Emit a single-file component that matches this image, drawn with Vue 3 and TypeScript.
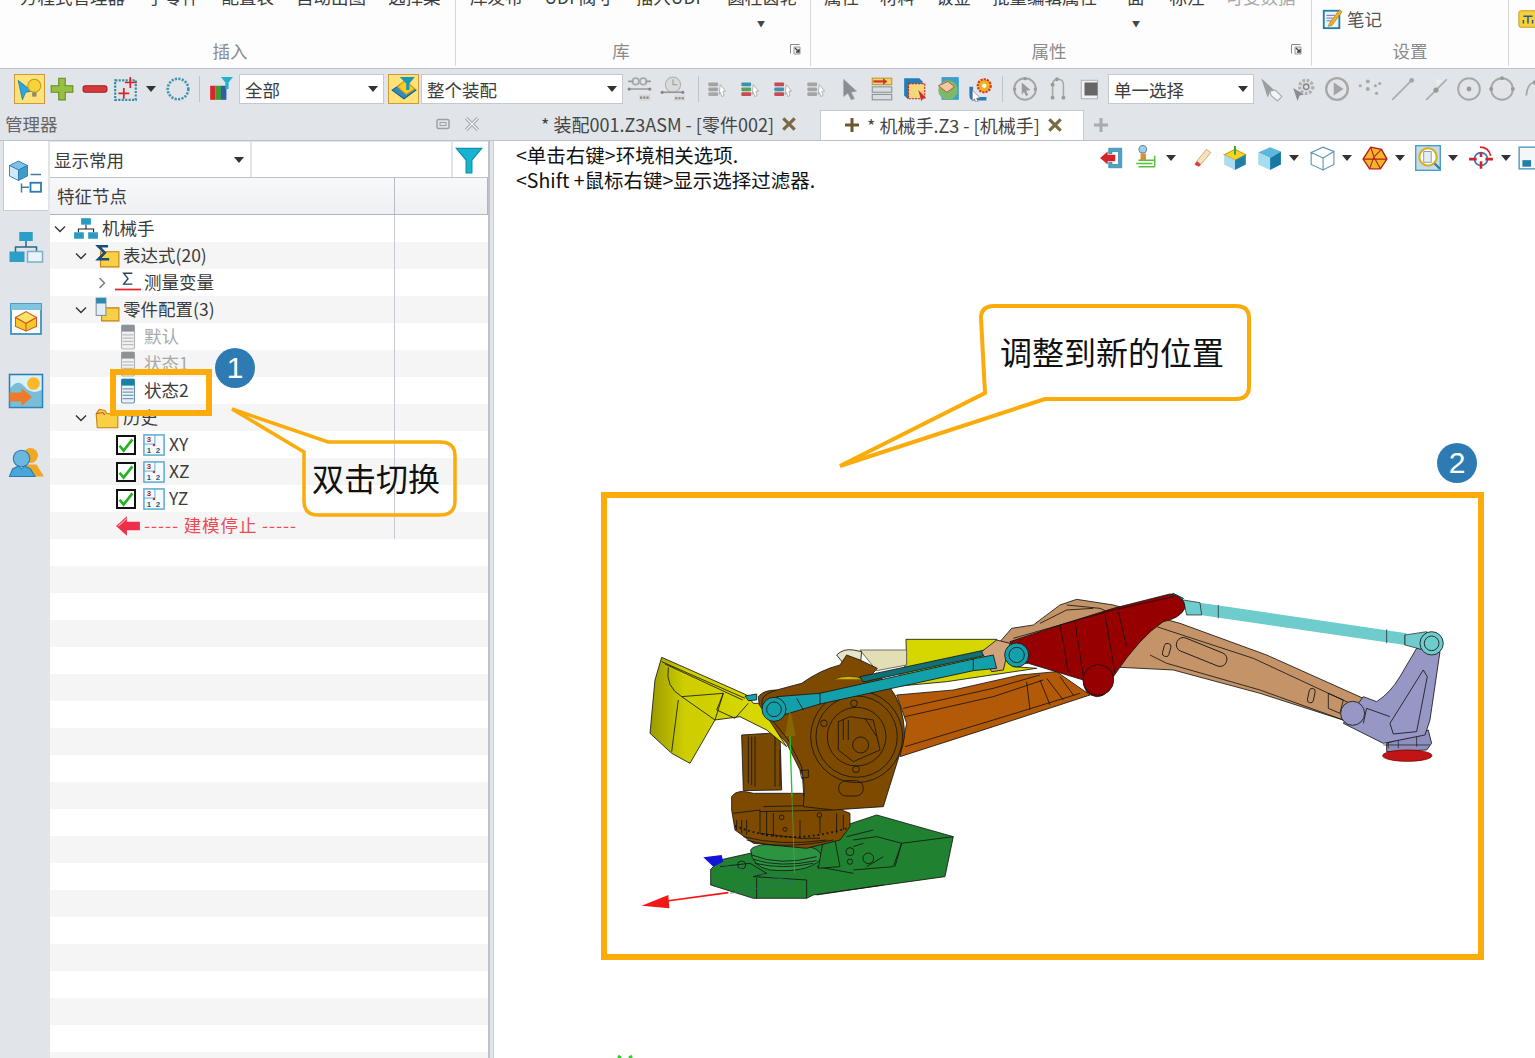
<template>
  <div class="app">
    <header class="ribbon">
      <section v-for="g in ribbonGroups" :key="g.label" class="rgroup" :class="g.cls">
        <div class="rgroup__items">
          <span v-for="it in g.items" :key="it.text" class="ritem" :class="{ 'ritem--off': it.off }">{{ it.text }}</span>
        </div>
        <span v-if="g.more !== undefined" class="rgroup__more">▼</span>
        <div class="rgroup__label">{{ g.label }}</div>
        <svg v-if="g.launcher" class="rgroup__launch" viewBox="0 0 12 12">
          <path d="M1.5 10.5V1.5H10.5" fill="none" stroke="#888" />
          <path d="M5 4h6v7H5z" fill="#eee" stroke="#999" />
          <path d="M6 5l4 4M10 6v3H7" fill="none" stroke="#444" stroke-width="1.3" />
        </svg>
      </section>
      <section class="rgroup rgroup--set">
        <div class="note-btn">
          <svg class="ic ic--22" viewBox="0 0 24 24" v-html="icons.note" />
          <span>笔记</span>
        </div>
        <div class="rgroup__label">设置</div>
      </section>
      <section class="rgroup rgroup--tail">
        <svg class="ic ic--22" viewBox="0 0 24 24" v-html="icons.tail" />
      </section>
    </header>

    <div class="toolbar">
      <span class="grip" />
      <span class="cell cell--on cell--31"><svg class="ic" viewBox="0 0 24 24" v-html="icons.bulb" /></span>
      <span class="cell"><svg class="ic" viewBox="0 0 24 24" v-html="icons.plus" /></span>
      <span class="cell"><svg class="ic" viewBox="0 0 24 24" v-html="icons.minus" /></span>
      <span class="cell cell--30"><svg class="ic" viewBox="0 0 24 24" v-html="icons.boxsel" /></span>
      <span class="cell cell--20"><i class="caret" /></span>
      <span class="cell cell--34"><svg class="ic" viewBox="0 0 24 24" v-html="icons.ring" /></span>
      <span class="sep sep--a" />
      <span class="cell cell--32"><svg class="ic" viewBox="0 0 24 24" v-html="icons.bars" /></span>
      <div class="select select--all"><span>全部</span><i class="caret" /></div>
      <span class="cell cell--on cell--31 cell--m"><svg class="ic" viewBox="0 0 24 24" v-html="icons.assy" /></span>
      <div class="select select--assy"><span>整个装配</span><i class="caret" /></div>
      <span v-for="n in toolsA" :key="n" class="cell"><svg class="ic" viewBox="0 0 24 24" v-html="icons[n]" /></span>
      <span class="sep sep--b" />
      <span v-for="(n, i) in toolsB" :key="i" class="cell"><svg class="ic" viewBox="0 0 24 24" v-html="icons[n]" /></span>
      <span class="sep sep--c" />
      <span v-for="n in toolsC" :key="n" class="cell"><svg class="ic" viewBox="0 0 24 24" v-html="icons[n]" /></span>
      <div class="select select--single"><span>单一选择</span><i class="caret" /></div>
      <span v-for="n in toolsD" :key="n" class="cell"><svg class="ic" viewBox="0 0 24 24" v-html="icons[n]" /></span>
    </div>

    <div class="strip">
      <div class="strip__title">
        <span>管理器</span>
        <svg class="pin" viewBox="0 0 14 12"><rect x="1" y="1.5" width="12" height="9" rx="1.5" fill="none" stroke="#9aa1aa" stroke-width="1.5" /><rect x="4" y="4.5" width="6" height="3" fill="none" stroke="#9aa1aa" /></svg>
        <svg class="close" viewBox="0 0 18 16"><path d="M3 2l12 12M15 2L3 14" stroke="#a5abb3" stroke-width="3.4" /><path d="M3 2l12 12M15 2L3 14" stroke="#f2f3f5" stroke-width="1.2" /></svg>
      </div>
      <div class="tabs">
        <div class="tab">
          <span>* 装配001.Z3ASM - [零件002]</span>
          <svg class="tab__x" viewBox="0 0 14 14"><path d="M2 2l10 10M12 2L2 12" stroke="#7a6a44" stroke-width="2.800" /></svg>
        </div>
        <div class="tab tab--active">
          <svg class="tab__pin" viewBox="0 0 16 16"><path d="M8 1v14M1 8h14" stroke="#6d5a2c" stroke-width="3" /></svg>
          <span>* 机械手.Z3 - [机械手]</span>
          <svg class="tab__x" viewBox="0 0 14 14"><path d="M2 2l10 10M12 2L2 12" stroke="#7a6a44" stroke-width="2.800" /></svg>
        </div>
        <svg class="tab__add" viewBox="0 0 16 16"><path d="M8 1v14M1 8h14" stroke="#a8acb2" stroke-width="3" /></svg>
      </div>
    </div>

    <div class="body">
      <aside class="side">
        <div class="side__btn side__btn--on"><svg class="ic ic--36" viewBox="0 0 24 24" v-html="icons.sideTree" /></div>
        <div class="side__btn"><svg class="ic ic--36" viewBox="0 0 24 24" v-html="icons.sideOrg" /></div>
        <div class="side__btn"><svg class="ic ic--36" viewBox="0 0 24 24" v-html="icons.sideCube" /></div>
        <div class="side__btn"><svg class="ic ic--36" viewBox="0 0 24 24" v-html="icons.sideImg" /></div>
        <div class="side__btn"><svg class="ic ic--36" viewBox="0 0 24 24" v-html="icons.sideUser" /></div>
      </aside>

      <div class="panel">
        <div class="filter">
          <div class="filter__sel"><span>显示常用</span><i class="caret" /></div>
          <div class="filter__input" />
          <div class="filter__btn">
            <svg viewBox="0 0 24 24" width="28" height="28"><path d="M1 2h22l-8.500 10v11h-5V12z" fill="#17b4d0" stroke="#0e8fb0" /></svg>
          </div>
        </div>
        <div class="thead"><div class="thead__main">特征节点</div></div>
        <div class="tree">
          <div v-for="(r, i) in rows" :key="i" class="row">
            <div v-if="r.text" class="row__main" :class="`lvl-${r.level}`">
              <svg v-if="r.chev" class="chev" viewBox="0 0 12 12">
                <path v-if="r.chev === 'down'" d="M1 3.500l5 5 5-5" fill="none" stroke="#333" stroke-width="1.400" />
                <path v-else d="M3.500 1l5 5-5 5" fill="none" stroke="#777" stroke-width="1.400" />
              </svg>
              <span v-else class="chev" />
              <span v-if="r.check" class="check">
                <svg viewBox="0 0 20 20" width="16" height="16"><path d="M2 11l5 6L18 3" fill="none" stroke="#1fb31f" stroke-width="3.200" /></svg>
              </span>
              <span class="row__icon" :class="{ 'row__icon--sm': r.check }">
                <svg class="ic" :class="r.check ? 'ic--22' : 'ic--26'" viewBox="0 0 24 24" v-html="icons[r.icon]" />
              </span>
              <span class="row__text" :class="r.tone">{{ r.text }}</span>
            </div>
          </div>
        </div>
      </div>

      <div class="split" />

      <main class="view">
        <div class="view__hint">
          <div>&lt;单击右键&gt;环境相关选项.</div>
          <div>&lt;Shift +鼠标右键&gt;显示选择过滤器.</div>
        </div>
        <div class="view__tools">
          <template v-for="t in viewTools" :key="t.icon">
            <span class="vcell" :class="t.cls"><svg class="ic ic--26" viewBox="0 0 24 24" v-html="icons[t.icon]" /></span>
            <span v-if="t.more" class="vcaret"><i class="caret" /></span>
          </template>
        </div>
      </main>
    </div>

    <!-- model on the graphics canvas, page coordinates -->
    <svg class="model" viewBox="600 580 900 478">
      <g stroke="#141414" stroke-width="2.500" stroke-linejoin="round" transform="translate(620 580) scale(.3333)">
        <path d="M858 178H1130L1180 260L1250 265L980 305L820 320L860 250Z" fill="#d6d600" />
        <path d="M720 210H860V255L770 272Z" fill="#e3dfb4" stroke="#555" />
        <path d="M650 225Q670 205 700 210L725 215L722 245L670 250Z" fill="#e8e4c8" />
        <path d="M365 465L480 458L485 630L370 632Z" fill="#7a4a00" />
        <path d="M385 470V610M405 470V620M465 465V620M480 510V620M395 470V615" fill="none" />
      </g>
      <g stroke="#141414" stroke-width="2.500" stroke-linejoin="round" transform="translate(1000 580) scale(.3333)">
        <path d="M-310 345L-140 330L60 285L170 275L270 345L-20 440L-300 530L-280 430Z" fill="#b35a08" />
        <path d="M-290 385L-20 325L120 285M-285 410L-20 350L130 300M-285 500L-20 420L240 340M80 305L90 390M120 300L150 375M140 295L190 360M180 290L220 345" fill="none" />
        <path d="M0 185L35 145L100 135L180 75L230 58L340 75L540 130L800 225L1090 355L1060 430L780 340L520 270L360 262L250 240Z" fill="#c49468" />
        <path d="M470 140L760 235L1050 370M450 225L500 250L780 330L1030 420M200 75L300 85L420 140M120 130L200 90L280 85" fill="none" />
        <rect x="525" y="195" width="160" height="42" rx="20" transform="rotate(22 605 216)" fill="none" />
        <rect x="490" y="190" width="20" height="40" rx="9" transform="rotate(15 500 210)" fill="none" />
        <rect x="925" y="325" width="18" height="44" rx="9" transform="rotate(12 934 347)" fill="none" />
        <path d="M985 340L1030 360L1020 400L985 385Z" fill="none" />
      </g>
      <g stroke="#141414" stroke-width="2.500" stroke-linejoin="round" transform="translate(620 580) scale(.3333)">
        <path d="M272 868L300 840L390 820L600 770L680 735L770 705L1000 770L975 890L580 945L560 955L400 955L272 915Z" fill="#208230" />
        <path d="M700 780L770 770L845 790L820 860L700 870M845 790L1000 770M845 790L825 860M400 890L560 900V955M590 860L700 880M410 895V955M590 945L790 915M300 860L390 850L440 880L400 890M680 770L760 750M700 800L730 790M740 860L790 830" fill="none" />
        <path d="M392 810Q400 790 510 790Q620 800 600 840Q560 880 450 870Q395 860 392 810Z" fill="#2c9440" />
        <path d="M395 825Q480 860 590 830M405 850Q490 870 580 850M400 838Q480 865 590 842" fill="none" />
        <path d="M590 745L660 735L645 780L660 860L595 865L610 780Z" fill="#208230" />
        <circle cx="745" cy="835" r="16" fill="none" /><circle cx="690" cy="815" r="12" fill="none" /><circle cx="365" cy="855" r="12" fill="none" /><circle cx="690" cy="845" r="8" fill="none" />
        <path d="M335 650Q350 625 400 640H550L640 680L690 700V740L660 780L560 805L400 790L345 750L335 690Z" fill="#7d4a00" />
        <path d="M340 700L420 690V760M420 695L640 690M420 760L540 775H600M540 720V775M600 710V760M370 770Q480 800 620 780M350 720V750M365 720V760M380 720V765M650 700V760M670 705V750M430 680L650 675M440 695V770M460 700V770M380 780Q480 812 640 780" fill="none" />
        <path d="M345 738Q500 800 680 745" fill="none" stroke-width="6" stroke-dasharray="5 9" />
        <circle cx="485" cy="712" r="7" fill="none" /><circle cx="598" cy="705" r="7" fill="none" /><circle cx="495" cy="748" r="6" fill="none" />
        <path d="M545 310Q600 270 660 255L680 225L720 240L772 265L745 295L770 280Q840 340 850 420Q860 480 840 520L790 680L640 690L550 680Q555 640 550 590L500 490L420 400L415 350Q430 330 470 330Z" fill="#7d4a00" />
        <circle cx="710" cy="470" r="138" fill="none" /><circle cx="710" cy="470" r="122" fill="none" /><circle cx="710" cy="470" r="88" fill="none" />
        <path d="M655 425L690 410L760 420L780 510L700 545L655 510Z" fill="none" /><circle cx="722" cy="495" r="24" fill="none" />
        <path d="M670 420V480M685 420V480M735 415L770 470" fill="none" />
        <circle cx="702" cy="370" r="10" fill="none" /><circle cx="612" cy="430" r="10" fill="none" /><circle cx="708" cy="568" r="10" fill="none" />
        <rect x="656" y="602" width="74" height="46" rx="22" fill="none" />
        <path d="M540 572L565 570V592L545 595Z" fill="none" />
        <path d="M470 330Q400 350 440 400L505 480L545 560L552 650" fill="none" />
        <path d="M640 298Q690 280 730 298" fill="#c9b400" stroke-width="1.500" />
        <defs><linearGradient id="bucket" x1="0" x2="1" y1="0" y2="0"><stop offset="0" stop-color="#9a9a00" /><stop offset=".25" stop-color="#cdcd00" /><stop offset="1" stop-color="#dcdc00" /></linearGradient></defs>
        <path d="M90 460L105 300L125 232L380 345L400 370L415 370L500 500L440 450L360 410L285 420L210 550L155 520Z" fill="url(#bucket)" />
        <path d="M125 245L375 355M135 252L368 360M145 262Q135 320 185 350L310 340L285 420M175 360L155 515M185 350L285 420M310 340L290 390L345 415L385 370" fill="none" />
        <path d="M375 348L410 342V360L385 362Z" fill="#14a0aa" />
        <path d="M720 290L1095 210L1098 226L730 306Z" fill="#0f7078" />
        <path d="M1085 215L1130 180L1170 190L1150 270L1115 275Z" fill="#d2a27a" />
        <path d="M470 350L600 340L1070 235L1120 225L1130 265L1060 272L600 372L490 405Z" fill="#14a0aa" />
        <path d="M600 340V372M530 355L550 390M1060 235V272" fill="none" />
        <circle cx="462" cy="388" r="36" fill="#14a0aa" /><circle cx="462" cy="388" r="22" fill="#14a0aa" />
        <path d="M510 385L527 468H495Z" fill="#8a7a00" fill-opacity=".6" stroke="none" />
        <path d="M510 468L516 650" stroke="#1ec81e" stroke-width="4" fill="none" />
        <path d="M516 650L524 880" stroke="#5aa05a" stroke-width="2" fill="none" />
        <path d="M290 850L520 905L330 940" stroke="#3a6a70" stroke-width="2" fill="none" />
        <path d="M250 832L305 825L310 845L280 860Z" fill="#1414d8" stroke="none" />
        <path d="M325 938L140 963" stroke="#ff1010" stroke-width="5" fill="none" />
        <path d="M65 977L145 945L148 985Z" fill="#f01818" stroke="none" />
      </g>
      <g stroke="#141414" stroke-width="2.500" stroke-linejoin="round" transform="translate(1000 580) scale(.3333)">
        <path d="M1160 490L1285 450L1295 490L1280 510L1160 515Z" fill="#8f8fbe" />
        <path d="M1150 495H1290M1165 480V505M1195 480V505M1250 470V500" fill="none" stroke-width="2" />
        <ellipse cx="1222" cy="527" rx="74" ry="17" fill="#c21414" stroke="#7a0a0a" />
        <path d="M1090 350L1130 365Q1170 340 1200 290L1250 205L1320 215L1290 420L1275 465L1150 490L1030 430Z" fill="#9797c6" />
        <path d="M1270 270L1170 430L1180 462L1250 455L1282 290Z" fill="none" />
        <path d="M1100 385L1170 410M1100 385L1090 430" fill="none" />
        <circle cx="1058" cy="400" r="36" fill="#9797c6" />
        <path d="M550 60L600 68L1220 160L1215 195L600 105L560 105Z" fill="#6fcccc" stroke-width="0" />
        <path d="M550 60L600 68L605 105L560 105ZM655 75V115M1160 148V190M1215 165V195" fill="none" stroke-width="2" />
        <path d="M1215 165L1280 155L1290 215L1215 195Z" fill="#6fcccc" stroke-width="2" />
        <circle cx="1295" cy="190" r="35" fill="#6fcccc" /><circle cx="1295" cy="190" r="22" fill="none" />
        <path d="M500 50L520 40L550 55L540 70Z" fill="#14a0aa" />
        <path d="M30 185L180 135L340 85L510 42Q555 50 555 85Q540 115 490 125Q420 170 340 290Q330 350 290 350Q250 345 250 300L85 250L60 250Z" fill="#960000" />
        <path d="M40 175L180 135L340 90L520 50M180 135L205 275M225 125L250 290M315 105L345 280M355 95L380 200" fill="none" />
        <circle cx="295" cy="300" r="46" fill="#960000" />
        <circle cx="50" cy="225" r="36" fill="#14a0aa" /><circle cx="50" cy="225" r="23" fill="none" />
      </g>
      <path d="M618 1056L621 1058M632 1056L629 1058" stroke="#2fd02f" stroke-width="3" fill="none" />
    </svg>

    <!-- annotations drawn over the screenshot -->
    <svg class="marks" viewBox="0 0 1535 1058">
      <path d="M232 409L328 442H440Q455 442 455 456V501Q455 515 440 515H318Q304 515 304 501V452Z" fill="none" stroke="#fbab0a" stroke-width="3.500" />
      <path d="M840 466L985 393L981 318Q981 306 994 306H1236Q1249 306 1249 318V386Q1249 399 1236 399H1045Z" fill="none" stroke="#fbab0a" stroke-width="4" />
    </svg>
    <div class="frame frame--state" />
    <div class="frame frame--model" />
    <span class="badge badge--one">1</span>
    <span class="badge badge--two">2</span>
    <span class="callout callout--switch">双击切换</span>
    <span class="callout callout--move">调整到新的位置</span>
  </div>
</template>

<script setup lang="ts">
interface RibbonItem { text: string; off?: boolean }
interface Row { level: number; chev?: 'down' | 'right'; icon: string; text: string; tone?: string; check?: boolean }

const ribbonGroups: { label: string; cls: string; items: RibbonItem[]; more?: boolean; launcher?: boolean }[] = [
  {
    label: '插入',
    cls: 'rgroup--insert',
    items: [{ text: '方程式管理器' }, { text: '子零件' }, { text: '配置表' }, { text: '自动出图' }, { text: '选择集' }],
  },
  {
    label: '库',
    cls: 'rgroup--lib',
    more: true,
    launcher: true,
    items: [{ text: '库发布' }, { text: 'UDF阀寸' }, { text: '插入UDF' }, { text: '圆柱齿轮' }],
  },
  {
    label: '属性',
    cls: 'rgroup--prop',
    more: true,
    launcher: true,
    items: [
      { text: '属性' }, { text: '材料' }, { text: '钣金' }, { text: '批量编辑属性' },
      { text: '面' }, { text: '标注' }, { text: '可变数据', off: true },
    ],
  },
]

const toolsA = ['refChain', 'refClock']
const toolsB = ['stackA', 'stackB', 'stackC', 'stackD', 'cursor', 'layers', 'cubeSel', 'globeHand', 'gearCursor']
const toolsC = ['navRing', 'curve', 'square']
const toolsD = ['pickTag', 'pickGear', 'play', 'dots', 'line', 'lineMid', 'target', 'circle3', 'arcEnd']

const viewTools: { icon: string; more?: boolean; cls?: string }[] = [
  { icon: 'exit' }, { icon: 'sweep', more: true }, { icon: 'eraser', cls: 'vcell--gap' }, { icon: 'cubeUp' },
  { icon: 'cubeBlue', more: true }, { icon: 'cubeWire', more: true }, { icon: 'poly', more: true },
  { icon: 'zoomDoc', more: true }, { icon: 'aim', more: true }, { icon: 'win', cls: 'vcell--last' },
]

const rows: Row[] = [
  { level: 0, chev: 'down', icon: 'org', text: '机械手' },
  { level: 1, chev: 'down', icon: 'folderSum', text: '表达式(20)' },
  { level: 2, chev: 'right', icon: 'sigma', text: '测量变量' },
  { level: 1, chev: 'down', icon: 'folderCfg', text: '零件配置(3)' },
  { level: 2, icon: 'cfgGray', text: '默认', tone: 'row__text--off' },
  { level: 2, icon: 'cfgGray', text: '状态1', tone: 'row__text--off' },
  { level: 2, icon: 'cfgBlue', text: '状态2' },
  { level: 1, chev: 'down', icon: 'folder', text: '历史' },
  { level: 2, icon: 'plane', text: 'XY', check: true },
  { level: 2, icon: 'plane', text: 'XZ', check: true },
  { level: 2, icon: 'plane', text: 'YZ', check: true },
  { level: 2, icon: 'stop', text: '----- 建模停止 -----', tone: 'row__text--stop' },
  ...Array.from({ length: 20 }, () => ({ level: 0, icon: '', text: '' })),
]

const stack = (a: string, b: string, c: string, cur = '#fff') => `
  <rect x="4" y="6" width="9" height="3.500" rx="1" fill="${a}"/>
  <rect x="4" y="10.500" width="9" height="3.500" rx="1" fill="${b}"/>
  <rect x="4" y="15" width="9" height="3.500" rx="1" fill="${c}"/>
  <path d="M15 8l5 6h-2.500l1 4-2 1-1.500-4-1 2z" fill="${cur}" stroke="#aaa" stroke-width=".8"/>`

const icons: Record<string, string> = {
  bulb: `<path d="M1 4l13 10-6 1-3 7z" fill="#2aa6e0" stroke="#14709f" stroke-width=".6"/>
    <circle cx="16" cy="9" r="6" fill="#f7d23a" stroke="#c99a1a"/><rect x="14" y="15" width="4" height="4" fill="#8a8a70"/>`,
  plus: `<path d="M9 2h6v7h7v6h-7v7H9v-7H2V9h7z" fill="#97bf43" stroke="#628c22"/>`,
  minus: `<rect x="1" y="9" width="22" height="6" rx="2" fill="#d43a3a" stroke="#a51e1e"/>`,
  boxsel: `<rect x="2" y="4" width="19" height="18" fill="none" stroke="#3a8aa5" stroke-width="2" stroke-dasharray="2 1.2"/>
    <path d="M16 1v10M11 6h11M10 11v10M5 16h10" stroke="#d0282c" stroke-width="1.600"/>`,
  ring: `<circle cx="12" cy="12" r="9.500" fill="none" stroke="#3f95ad" stroke-width="2.400" stroke-dasharray="2 1.200"/>`,
  bars: `<rect x="2" y="9" width="5" height="13" fill="#d8262a"/><rect x="7" y="9" width="5" height="13" fill="#3f9a3a"/><rect x="12" y="9" width="5" height="13" fill="#2f5da8"/>
    <path d="M12 1h11l-4 5v6h-3V6z" fill="#20b4c8"/>`,
  assy: `<path d="M1 13l9-6 13 6-11 8z" fill="#2f8bc0" stroke="#14608f"/><path d="M6 10l7-6 9 8-8 5z" fill="#f9cc1d" stroke="#c99a1a"/><path d="M8 1h14l-5 6v6h-3V7z" fill="#1799b8"/>`,
  refChain: `<circle cx="8" cy="5" r="3" fill="none" stroke="#aaa" stroke-width="1.500"/><circle cx="15" cy="5" r="3" fill="none" stroke="#aaa" stroke-width="1.500"/>
    <path d="M1 5h5M17 5h5M2 12h19" stroke="#999" stroke-width="1.600"/><circle cx="2" cy="12" r="1.500" fill="#888"/><circle cx="21" cy="12" r="1.500" fill="#888"/>
    <rect x="11" y="17" width="11" height="6" fill="#d8d8d8"/><path d="M12 20h9" stroke="#888" stroke-width="2" stroke-dasharray="2 1"/>`,
  refClock: `<circle cx="12" cy="8" r="7" fill="#d9dadc" stroke="#b5b5b5"/><path d="M12 3v5h4" stroke="#999" fill="none"/>
    <path d="M2 15h19" stroke="#999" stroke-width="1.600"/><circle cx="2" cy="15" r="1.500" fill="#888"/><circle cx="21" cy="15" r="1.500" fill="#888"/>
    <rect x="13" y="18" width="10" height="5" fill="#d8d8d8"/><path d="M14 20.500h8" stroke="#888" stroke-width="2" stroke-dasharray="2 1"/>`,
  stackA: stack('#a2a2a2', '#a2a2a2', '#a8a8a8'),
  stackB: stack('#3a94ac', '#5aa05a', '#c84a52'),
  stackC: stack('#c84a52', '#3a94ac', '#c84a52'),
  stackD: stack('#a4a4a4', '#a4a4a4', '#a4a4a4'),
  cursor: `<path d="M7 3l12 11-5 1 3 6-3 1-3-6-4 3z" fill="#8a8e94" stroke="#a5a5a5" stroke-width=".6"/>`,
  layers: `<rect x="3" y="2" width="18" height="6" fill="#f3d266" stroke="#b99a3a"/><path d="M4 5h11" stroke="#d03030" stroke-width="2"/><path d="M13 2l4 3-4 3z" fill="#d03030"/>
    <rect x="3" y="10" width="18" height="5" fill="#d8dde0" stroke="#8a9299"/><rect x="3" y="17" width="18" height="5" fill="#d8dde0" stroke="#8a9299"/>`,
  cubeSel: `<path d="M2 2h14l3 3v16H5l-3-3z" fill="#1f7fb8"/><rect x="6" y="7" width="15" height="14" fill="#f3d77a" stroke="#c02a2a" stroke-dasharray="2 1"/><path d="M15 13l7 7-3 .5-1 3z" fill="#d0282c"/>`,
  globeHand: `<rect x="6" y="1" width="16" height="21" fill="#3aa0c8"/><circle cx="12" cy="13" r="9" fill="#7fb86a"/><path d="M3 9l9-4 6 5-7 5z" fill="#f0c9a0" stroke="#b05030" stroke-width=".8"/>`,
  gearCursor: `<path d="M3 10v8q0 3 3 3h11" fill="none" stroke="#2a7ab8" stroke-width="3.400"/><circle cx="15" cy="9" r="6" fill="#f0b020" stroke="#d03a20" stroke-dasharray="2 1" stroke-width="2"/><circle cx="15" cy="9" r="2" fill="#fff"/>
    <path d="M4 13l7 7-3 .5 1 3-2 .5-1-3-2 2z" fill="#fff" stroke="#777" stroke-width=".6"/>`,
  navRing: `<circle cx="12" cy="12" r="10" fill="none" stroke="#a5a5a5" stroke-width="1.800"/><circle cx="2.500" cy="12" r="1.500" fill="#999"/><circle cx="21.500" cy="12" r="1.500" fill="#999"/><circle cx="12" cy="2.500" r="1.500" fill="#999"/><path d="M9 6l8 7-4 .5 2 4-2 1-2-4-2 3z" fill="#999"/>`,
  curve: `<path d="M7 20V8q0-5 5-5t5 5v12" fill="none" stroke="#a8a8a8" stroke-width="1.400"/><circle cx="7" cy="8" r="1.800" fill="#999"/><circle cx="7" cy="20" r="1.800" fill="#999"/><circle cx="17" cy="20" r="1.800" fill="#999"/><circle cx="11" cy="3" r="1.800" fill="#999"/>`,
  square: `<rect x="3" y="4" width="15" height="17" fill="#f2f3f4" stroke="#b5b5b5"/><rect x="6" y="6" width="12" height="12" fill="#666"/>`,
  pickTag: `<path d="M3 2l13 12-5 1-2 5z" fill="#9a9ea3"/><path d="M11 14l5-1 6 6-4 4-6-5z" fill="#f3f4f5" stroke="#aaa"/>`,
  pickGear: `<circle cx="14" cy="10" r="6" fill="none" stroke="#b0b0b0" stroke-width="3" stroke-dasharray="2.500 1.500"/><circle cx="14" cy="10" r="2.500" fill="none" stroke="#888" stroke-width="1.400"/><path d="M2 11l10 6-4 1-2 5z" fill="#8a8e94"/>`,
  play: `<circle cx="12" cy="12" r="10" fill="none" stroke="#a8a8a8" stroke-width="2.200"/><path d="M9 6l9 6-9 6z" fill="#a4a4a4"/>`,
  dots: `<g fill="#a8a8a8"><circle cx="3" cy="9" r="1.400"/><circle cx="10" cy="5" r="1.800"/><circle cx="10" cy="12" r="1.800"/><circle cx="17" cy="9" r="1.400"/><circle cx="21" cy="7" r="1.400"/><circle cx="18" cy="16" r="1.500"/></g>`,
  line: `<path d="M2 22L19 5" stroke="#acacac" stroke-width="1.600"/><circle cx="20" cy="4" r="2.200" fill="#a5a5a5"/>`,
  lineMid: `<path d="M3 22L22 3" stroke="#acacac" stroke-width="1.600"/><circle cx="12" cy="13" r="2.400" fill="#999"/><path d="M12 3l6 1-5 5z" fill="#eee"/>`,
  target: `<circle cx="12" cy="12" r="10" fill="none" stroke="#a8a8a8" stroke-width="1.800"/><circle cx="12" cy="12" r="2.200" fill="#999"/>`,
  circle3: `<circle cx="12" cy="12" r="10" fill="none" stroke="#a8a8a8" stroke-width="1.800"/><circle cx="12" cy="2" r="1.800" fill="#999"/><circle cx="2" cy="12" r="1.800" fill="#999"/><circle cx="22" cy="12" r="1.800" fill="#999"/>`,
  arcEnd: `<path d="M4 18Q5 6 12 6t8 12" fill="none" stroke="#a8a8a8" stroke-width="1.600"/><circle cx="12" cy="6" r="2" fill="#999"/>`,
  exit: `<path d="M9 3h12v18H9v-5h3v2h6V6h-6v2H9z" fill="#4aa5c8" stroke="#2a7a9f" stroke-width=".6"/><path d="M1 12l7-6v3h7v6H8v3z" fill="#d4242a"/>`,
  sweep: `<circle cx="9" cy="4" r="3.500" fill="#9fd0e8" stroke="#5a8aa0"/><rect x="7" y="8" width="5" height="6" fill="#e88a30"/><path d="M5 14h15M3 17h15M5 20h15M20 10v10" fill="none" stroke="#58c038" stroke-width="1.400"/>`,
  eraser: `<path d="M17 4l4 3-9 11-4-3z" fill="#f7e2b8" stroke="#a09060" stroke-width=".6"/><path d="M8 15l4 3-2 2-4-2z" fill="#d83a4a"/>`,
  cubeUp: `<path d="M2 9l10-5 10 5-10 5z" fill="#f7d328" stroke="#c8a010"/><path d="M2 9v9l10 5v-9z" fill="#a8dcee"/><path d="M22 9v9l-10 5v-9z" fill="#1f7fa8"/><path d="M12 1v8" stroke="#3aa03a" stroke-width="1.800"/>`,
  cubeBlue: `<path d="M2 7l11-5 10 4-10 6z" fill="#5cb7dc"/><path d="M2 7v11l11 5V12z" fill="#a6dcf0"/><path d="M23 6v12l-10 5V12z" fill="#1579a3"/>`,
  cubeWire: `<path d="M2 7l11-5 10 4-10 6zM2 7v11l11 5V12zM23 6v12l-10 5V12z" fill="#fff" stroke="#5a93b5" stroke-width="1"/>`,
  poly: `<path d="M8 2l10 2 5 9-6 9-10 0-6-9z" fill="#f3b62a" stroke="#b51e1e" stroke-width="1.300"/><path d="M8 2l3 9 7-7M1 13h10l12 0M11 11l-4 11M11 11l6 11" stroke="#b51e1e" fill="none"/>`,
  zoomDoc: `<rect x="0.500" y="0.500" width="23" height="23" fill="#c7dcea" stroke="#4aa0c8" stroke-width="1.600"/><circle cx="12" cy="11" r="8" fill="#fff" stroke="#d8b020" stroke-width="2"/><path d="M8 6h7v10H8z" fill="#e6edf2" stroke="#7a93a5" stroke-width=".8"/><path d="M18 17l5 5" stroke="#2a7a9f" stroke-width="2"/>`,
  aim: `<circle cx="12" cy="13" r="6" fill="none" stroke="#3a7ab0" stroke-width="1.600"/><path d="M1 13h7M16 13h7M12 7v4M12 15v7" stroke="#d4242a" stroke-width="2.400"/><path d="M11 2q8 0 10 8" fill="none" stroke="#d4242a" stroke-width="1.600"/>`,
  win: `<rect x="2" y="2" width="20" height="20" fill="#f4f7f9" stroke="#5fa0c0" stroke-width="1.400"/><rect x="5" y="14" width="8" height="6" fill="#1f7fa8"/>`,
  note: `<rect x="3" y="3" width="17" height="19" fill="#eaf3f8" stroke="#1f7fa8" stroke-width="2"/><path d="M6 8h9M6 11h7M6 14h5" stroke="#66a" /><path d="M9 17L20 2l3 2-11 15-4 1z" fill="#f0b020" stroke="#a06a10" stroke-width=".6"/>`,
  tail: `<rect x="2" y="3" width="20" height="18" rx="2" fill="#f7cf3a" stroke="#c09a1a"/><path d="M7 9h10M12 9v8M7 13v4M17 13v4" stroke="#1f5a8f" stroke-width="1.600" fill="none"/>`,
  sideTree: `<path d="M1 5l6-3 6 3-6 3z" fill="#7fc0e4" stroke="#2a7ab8" stroke-width=".6"/><path d="M1 5v7l6 3V8z" fill="#cfe8f5" stroke="#2a7ab8" stroke-width=".6"/><path d="M13 5v7l-6 3V8z" fill="#3f9bcc" stroke="#2a7ab8" stroke-width=".6"/>
    <path d="M15 11h7M9 17v6M9 19.500h5" stroke="#4a7a99" stroke-width="1" fill="none"/><rect x="15" y="16.500" width="7" height="6" fill="#fff" stroke="#2a7ab8" stroke-width="1.200"/>`,
  sideOrg: `<rect x="7.500" y="2" width="9" height="6" fill="#2aa0c8"/><path d="M12 8v4M5 16v-4h14v4" stroke="#27658a" fill="none"/><rect x="1" y="15" width="10" height="7" fill="#2aa0c8"/><rect x="13" y="15" width="10" height="7" fill="#eaf3f8" stroke="#7ab0cc"/>`,
  sideCube: `<rect x="2" y="2" width="20" height="20" fill="#fff" stroke="#3f93bd" stroke-width="1.200"/><rect x="2" y="2" width="20" height="4" fill="#7fc4e0"/><path d="M5 11l7-4 7 4-7 4z" fill="#fbe36a" stroke="#d05a20" stroke-width=".7"/><path d="M5 11v6l7 3v-5zM19 11v6l-7 3v-5z" fill="#f5c92a" stroke="#d05a20" stroke-width=".7"/>`,
  sideImg: `<rect x="1" y="1" width="22" height="22" fill="#d8f0f8" stroke="#2a7ab8"/><circle cx="17" cy="7" r="4.200" fill="#f9b82a"/><path d="M1 11q5-8 10-2t12 2v12H1z" fill="#3a9cc0" fill-opacity=".6"/><path d="M1 13h8v-3l7 6-7 6v-3H1z" fill="#ee7a2a"/>`,
  sideUser: `<circle cx="15" cy="7" r="5" fill="#f0a824" /><path d="M11 13h8l5 8H14z" fill="#f0a824"/><circle cx="9" cy="9" r="5.500" fill="#6ab8e0" stroke="#2a7ab8" stroke-width=".7"/><path d="M7 14l2 2 2-2 4 2 3 5H1l2-5z" fill="#4aa5d8" stroke="#2a7ab8" stroke-width=".7"/>`,
  org: `<rect x="7.500" y="2" width="9" height="6" fill="#2a9cc4"/><path d="M12 8v4M5 15v-3h14v3" stroke="#222" fill="none"/><rect x="1" y="15" width="9" height="6" fill="#2a9cc4"/><rect x="14" y="15" width="9" height="6" fill="#2a9cc4"/>`,
  folder: `<path d="M2 8l3-4 5 1 2 3h10v13H3z" fill="#f8cf45" stroke="#c88010"/><path d="M2 8l6-1 2 2" fill="none" stroke="#d9531e"/>`,
  folderSum: `<path d="M6 8h17v14H6z" fill="#f8cf45" stroke="#c88010"/><path d="M13 3H4l6 6-6 6h10" fill="none" stroke="#1a4a7a" stroke-width="2.400"/>`,
  folderCfg: `<path d="M7 10h16v12H7z" fill="#f8cf45" stroke="#c88010"/><rect x="2" y="1" width="9" height="16" fill="#e6edf2" stroke="#7a93a5"/><rect x="2" y="1" width="9" height="5" fill="#2a8ab0"/>`,
  sigma: `<path d="M16 3H8l4 5-4 5h8" fill="none" stroke="#245" stroke-width="1.300"/><path d="M0 18h24" stroke="#e8202a" stroke-width="1.600"/>`,
  cfgGray: `<rect x="6" y="1" width="12" height="22" rx="1.500" fill="#f1f2f3" stroke="#aeb1b5"/><rect x="6" y="1" width="12" height="6" fill="#8d9094"/><path d="M7 10h10M7 13h10M7 16h10M7 19h10" stroke="#bbb"/>`,
  cfgBlue: `<rect x="6" y="1" width="12" height="22" rx="1.500" fill="#e9f2f6" stroke="#6a93a8"/><rect x="6" y="1" width="12" height="6" fill="#1580a8"/><path d="M7 10h10M7 13h10M7 16h10M7 19h10" stroke="#7a9cb0"/>`,
  plane: `<rect x="1" y="1" width="22" height="22" fill="#f4fafd" stroke="#5aa9cc" stroke-width="1.600"/><path d="M13 1v10M1 11h12" stroke="#5aa9cc"/><circle cx="12" cy="12" r="1.400" fill="#e02a2a"/>
    <g font-family="Liberation Sans" font-size="8.500" font-weight="700"><text x="4" y="9" fill="#a02a2a">3</text><text x="4" y="21" fill="#285a7a">1</text><text x="14" y="21" fill="#285a7a">2</text></g>`,
  stop: `<path d="M1 12l10-9v5h12v8H11v5z" fill="#ef2f4a"/><path d="M3 12l8-7" stroke="#ff9aa5"/>`,
}
</script>

<style>
html, body { margin: 0; background: #fff; }
</style>

<style scoped>
.app {
  position: relative;
  display: flex;
  flex-direction: column;
  width: 1535px;
  height: 1058px;
  overflow: hidden;
  background: #fff;
  font-family: "Noto Sans CJK SC", "Noto Sans", sans-serif;
  font-size: 17.500px;
  color: #3c3c3c;
}
.ic { display: block; width: 28px; height: 28px; }
.ic--22 { width: 22px; height: 22px; }
.ic--26 { width: 26px; height: 26px; }
.ic--36 { width: 36px; height: 36px; }

/* ribbon */
.ribbon {
  display: flex;
  flex: none;
  height: 68px;
  padding-left: 1px;
  background: #fdfdfe;
  border-bottom: 1px solid #bcc2c9;
  overflow: hidden;
}
.rgroup {
  position: relative;
  flex: none;
  height: 66px;
  border-right: 1px solid #d5d8dc;
}
.rgroup--insert { width: 454px; }
.rgroup--lib { width: 354px; }
.rgroup--prop { width: 500px; }
.rgroup--set { width: 196px; }
.rgroup--tail { flex: 1; border-right: 0; padding: 8px 0 0 8px; }
.rgroup__items {
  display: flex;
  margin-top: -13px;
  line-height: 20px;
  white-space: nowrap;
}
.ritem--off { color: #a8a8a8; }
.rgroup--insert .rgroup__items { padding-left: 19px; gap: 22px; }
.rgroup--lib .rgroup__items { padding-left: 14px; gap: 22px; }
.rgroup--prop .rgroup__items { padding-left: 13px; gap: 21px; }
.rgroup--prop .ritem:nth-child(5) { margin-left: 9px; }
.rgroup--prop .ritem:nth-child(6) { margin-left: 4px; }
.rgroup__more {
  position: absolute;
  top: 18px;
  font-size: 8px;
  line-height: 12px;
  color: #444;
}
.rgroup--lib .rgroup__more { left: 301px; }
.rgroup--prop .rgroup__more { left: 321px; }
.rgroup__label {
  position: absolute;
  left: 0;
  right: 0;
  top: 39px;
  line-height: 24px;
  text-align: center;
  font-size: 17.500px;
  color: #8b8b8b;
}
.rgroup--insert .rgroup__label { left: 4px; }
.rgroup--lib .rgroup__label, .rgroup--prop .rgroup__label { right: 24px; }
.rgroup__launch {
  position: absolute;
  right: 9px;
  top: 43px;
  width: 12px;
  height: 12px;
}
.note-btn {
  display: flex;
  align-items: center;
  gap: 4px;
  padding: 8px 0 0 9px;
  font-size: 17.500px;
  color: #555;
  line-height: 22px;
}

/* command bar */
.toolbar {
  display: flex;
  flex: none;
  align-items: center;
  height: 40px;
  background: #e1e4e8;
}
.grip {
  width: 3px;
  height: 24px;
  margin: 0 10px 0 4px;
  background: repeating-linear-gradient(#6a7585 0 2px, transparent 2px 5px);
}
.cell {
  display: flex;
  flex: none;
  align-items: center;
  justify-content: center;
  width: 33px;
  height: 30px;
}
.cell .ic { width: 26px; height: 26px; }
.cell--20 { width: 20px; }
.cell--30 { width: 30px; }
.cell--31 { width: 31px; }
.cell--32 { width: 32px; }
.cell--34 { width: 34px; }
.cell--m { margin: 0 2px 0 4px; }
.cell--on { box-sizing: border-box; background: #ffe27a; border: 1px solid #d09a3a; }
.sep { flex: none; width: 1px; height: 26px; background: #bfc4ca; }
.sep--a { margin: 0 5px 0 4px; }
.sep--b { margin: 0 1px 0 9px; }
.sep--c { margin: 0 5px 0 5px; }
.caret {
  display: block;
  width: 0;
  height: 0;
  border: 5px solid transparent;
  border-top: 6px solid #333;
  border-bottom: 0;
}
.select {
  display: flex;
  flex: none;
  align-items: center;
  justify-content: space-between;
  box-sizing: border-box;
  height: 30px;
  padding: 0 5px 0 5px;
  background: #fff;
  border: 1px solid #c4c9cf;
  font-size: 17.500px;
}
.select--all { width: 145px; margin-left: 2px; }
.select--assy { width: 202px; }
.select--single { width: 146px; margin-left: 1px; }

/* manager title and document tabs */
.strip {
  display: flex;
  flex: none;
  height: 32px;
  background: #e1e4e8;
  border-bottom: 1px solid #bcc2c9;
  box-sizing: border-box;
}
.strip__title {
  display: flex;
  flex: none;
  align-items: center;
  width: 495px;
  padding: 0 0 2px 5px;
  box-sizing: border-box;
  color: #666;
  font-size: 17.500px;
}
.pin { width: 14px; height: 12px; margin-left: 378px; }
.close { width: 18px; height: 16px; margin-left: 13px; }
.tabs { display: flex; align-items: stretch; }
.tab {
  display: flex;
  align-items: center;
  width: 325px;
  box-sizing: border-box;
  padding: 0 0 2px 46px;
  white-space: nowrap;
  font-size: 18px;
  color: #444;
}
.tab__x { flex: none; width: 16px; height: 16px; margin-left: 7px; }
.tab--active {
  width: 264px;
  padding-left: 23px;
  margin-top: 1px;
  background: #fff;
  border: 1px solid #c8ccd2;
  border-bottom: 0;
}
.tab__pin { flex: none; width: 16px; height: 16px; margin-right: 7px; }
.tab__add { align-self: center; width: 16px; height: 16px; margin-left: 9px; }

/* body */
.body { display: flex; flex: 1; min-height: 0; }
.side {
  flex: none;
  width: 50px;
  box-sizing: border-box;
  padding-left: 3px;
  background: #e1e4e8;
}
.side__btn {
  display: flex;
  align-items: center;
  justify-content: center;
  width: 45px;
  height: 72px;
}
.side__btn--on {
  height: 70px;
  background: #fff;
  border: 1px solid #c8ccd2;
  border-right: 0;
  border-top: 0;
  box-sizing: border-box;
}
.panel { flex: none; width: 438px; display: flex; flex-direction: column; overflow: hidden; }
.filter { display: flex; flex: none; height: 37px; box-sizing: border-box; padding-top: 1px; border-bottom: 1px solid #bcc2c9; background: #e1e4e8; gap: 2px; }
.filter__sel {
  display: flex;
  align-items: center;
  justify-content: space-between;
  width: 200px;
  padding: 0 6px 0 4px;
  box-sizing: border-box;
  background: #fff;
}
.filter__input { width: 199px; background: #fff; }
.filter__btn { display: flex; align-items: center; justify-content: center; box-sizing: border-box; width: 35px; padding-right: 3px; background: #fff; }
.thead {
  flex: none;
  height: 37px;
  box-sizing: border-box;
  background: linear-gradient(#f7f8fa, #eef0f3);
  border-bottom: 1px solid #b0b6c0;
  border-right: 1px solid #b0b6c0;
}
.thead__main {
  box-sizing: border-box;
  width: 345px;
  height: 100%;
  padding-left: 7px;
  line-height: 36px;
  border-right: 1px solid #b8bcc8;
}
.tree { flex: 1; overflow: hidden; }
.row { height: 27px; background: #fff; }
.row:nth-child(even) { background: #f5f5f5; }
.row__main {
  display: flex;
  align-items: center;
  box-sizing: border-box;
  width: 345px;
  height: 27px;
  border-right: 1px solid #c8c8d8;
  white-space: nowrap;
}
.lvl-1 { padding-left: 21px; }
.lvl-2 { padding-left: 42px; }
.chev { flex: none; width: 12px; height: 12px; padding: 0 4px; }
.row__icon { display: flex; flex: none; align-items: center; justify-content: center; width: 32px; }
.row__icon--sm { width: 22px; margin-right: 4px; }
.check {
  display: flex;
  flex: none;
  align-items: center;
  justify-content: center;
  box-sizing: border-box;
  width: 20px;
  height: 20px;
  margin: 0 7px 0 4px;
  background: #fff;
  border: 2px solid #111;
}
.row__text { margin-bottom: 2px; }
.row__text--off { color: #a9a9a9; }
.row__text--stop { color: #ee4a55; letter-spacing: .9px; }
.split {
  flex: none;
  width: 6px;
  box-sizing: border-box;
  background: #e1e4e8;
  border-left: 2px solid #bcc2c9;
  border-right: 1px solid #c8ccd2;
}
.view {
  display: flex;
  flex: 1;
  min-width: 0;
  padding: 1px 0 0 22px;
}
.view__hint { flex: none; width: 579px; font-size: 19.500px; line-height: 25px; color: #111; white-space: nowrap; }
.view__tools { display: flex; align-items: center; height: 32px; }
.vcell { display: flex; flex: none; align-items: center; justify-content: center; width: 34px; }
.vcell--gap { margin-left: 2px; }
.vcell--last { margin-left: -4px; }
.vcaret { flex: none; box-sizing: border-box; width: 19px; padding-left: 3px; }

/* free canvas */
.model {
  position: absolute;
  left: 600px;
  top: 580px;
  width: 900px;
  height: 478px;
  pointer-events: none;
}

/* annotations */
.marks { position: absolute; inset: 0; width: 1535px; height: 1058px; pointer-events: none; }
.frame { position: absolute; box-sizing: border-box; border: 6px solid #fbab0a; }
.frame--state { left: 110px; top: 369px; width: 102px; height: 47px; }
.frame--model { left: 601px; top: 492px; width: 883px; height: 468px; }
.badge {
  position: absolute;
  width: 40px;
  height: 40px;
  border-radius: 50%;
  background: #2e7bb4;
  color: #fff;
  font-family: "Liberation Sans", sans-serif;
  font-size: 30px;
  line-height: 40px;
  text-align: center;
}
.badge--one { left: 215px; top: 348px; }
.badge--two { left: 1437px; top: 443px; }
.callout { position: absolute; font-size: 32px; line-height: 40px; color: #111; white-space: nowrap; }
.callout--switch { left: 312px; top: 457px; }
.callout--move { left: 1000px; top: 331px; }
</style>
